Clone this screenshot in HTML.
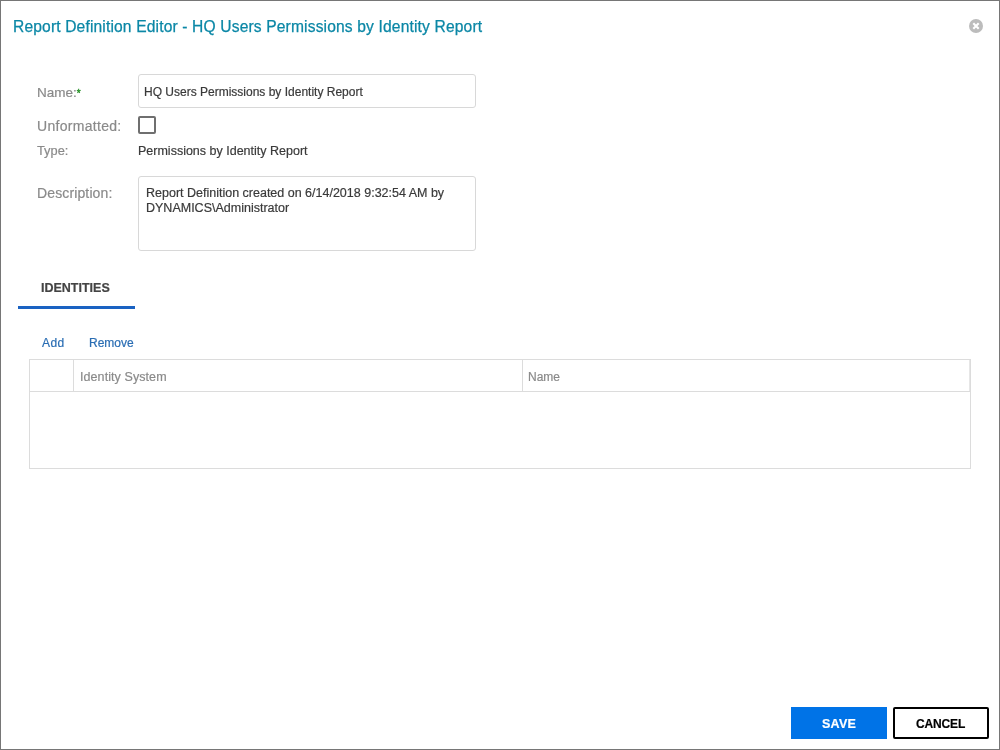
<!DOCTYPE html>
<html>
<head>
<meta charset="utf-8">
<style>
html,body{margin:0;padding:0;width:1000px;height:750px;overflow:hidden;background:#fff;}
body{font-family:"Liberation Sans",sans-serif;position:relative;}
#frame{position:absolute;left:0;top:0;width:998px;height:748px;border:1px solid #767676;}
.t{position:absolute;white-space:nowrap;line-height:1;will-change:transform;-webkit-text-stroke:0.2px currentColor;}
.box{position:absolute;box-sizing:border-box;}
</style>
</head>
<body>
<div id="frame"></div>

<div class="t" id="title" style="left:13px;top:19px;font-size:15.6px;color:#0b87a6;letter-spacing:0.15px;-webkit-text-stroke:0.25px #0b87a6;">Report Definition Editor - HQ Users Permissions by Identity Report</div>

<svg class="box" style="left:968px;top:18px;width:16px;height:16px" viewBox="0 0 16 16">
  <circle cx="8" cy="8" r="7" fill="#bcbcbc"/>
  <path d="M5.3 5.3 L10.7 10.7 M10.7 5.3 L5.3 10.7" stroke="#fff" stroke-width="2.1" stroke-linecap="butt"/>
</svg>

<div class="t" id="lname" style="left:37px;top:86px;font-size:13.5px;color:#8a8a8a;">Name:<span style="color:#1a8a1a;font-size:10px;position:relative;top:0px;left:0px;-webkit-text-stroke:0.3px #1a8a1a">*</span></div>
<div class="box" style="left:138px;top:74px;width:338px;height:34px;border:1px solid #d8d8d8;border-radius:3px;"></div>
<div class="t" id="vname" style="left:144px;top:86px;font-size:12px;color:#3a3a3a;">HQ Users Permissions by Identity Report</div>

<div class="t" id="lunf" style="left:37px;top:119px;font-size:14px;color:#8a8a8a;letter-spacing:0.3px;">Unformatted:</div>
<div class="box" style="left:138px;top:116px;width:18px;height:18px;border:2px solid #6f6f6f;border-radius:2px;"></div>

<div class="t" id="ltype" style="left:37px;top:145px;font-size:12.8px;color:#8a8a8a;">Type:</div>
<div class="t" id="vtype" style="left:138px;top:145px;font-size:12.5px;color:#3a3a3a;">Permissions by Identity Report</div>

<div class="t" id="ldesc" style="left:37px;top:186px;font-size:14px;color:#8a8a8a;letter-spacing:0.13px;">Description:</div>
<div class="box" style="left:138px;top:176px;width:338px;height:75px;border:1px solid #d8d8d8;border-radius:3px;"></div>
<div class="t" id="vdesc" style="left:146px;top:186px;font-size:12.5px;line-height:15px;color:#3a3a3a;">Report Definition created on 6/14/2018 9:32:54 AM by<br>DYNAMICS\Administrator</div>

<div class="t" id="tab" style="left:41px;top:282px;font-size:12.5px;font-weight:bold;color:#444;">IDENTITIES</div>
<div class="box" style="left:18px;top:306px;width:117px;height:3px;background:#1a62c2;"></div>

<div class="t" id="add" style="left:42px;top:336.5px;font-size:12px;color:#2a6db3;letter-spacing:0.4px;">Add</div>
<div class="t" id="remove" style="left:89px;top:336.5px;font-size:12px;color:#2a6db3;">Remove</div>

<div class="box" style="left:29px;top:359px;width:942px;height:110px;border:1px solid #dcdcdc;"></div>
<div class="box" style="left:29px;top:391px;width:942px;height:1px;background:#dcdcdc;"></div>
<div class="box" style="left:73px;top:359px;width:1px;height:33px;background:#dcdcdc;"></div>
<div class="box" style="left:522px;top:359px;width:1px;height:33px;background:#dcdcdc;"></div>
<div class="box" style="left:969px;top:360px;width:1px;height:31px;background:#e6e6e6;"></div>
<div class="t" id="hid" style="left:80px;top:371.4px;font-size:12.5px;color:#8a8a8a;letter-spacing:0.08px;">Identity System</div>
<div class="t" id="hname" style="left:528px;top:371.4px;font-size:12px;color:#8a8a8a;">Name</div>

<div class="box" style="left:791px;top:707px;width:96px;height:32px;background:#0073e7;"></div>
<div class="t" id="save" style="left:822px;top:718px;font-size:12.5px;font-weight:bold;color:#fff;letter-spacing:0.25px;">SAVE</div>
<div class="box" style="left:893px;top:707px;width:96px;height:32px;border:2px solid #000;border-radius:2px;"></div>
<div class="t" id="cancel" style="left:916px;top:718px;font-size:12px;font-weight:bold;color:#000;letter-spacing:-0.15px;">CANCEL</div>

</body>
</html>
